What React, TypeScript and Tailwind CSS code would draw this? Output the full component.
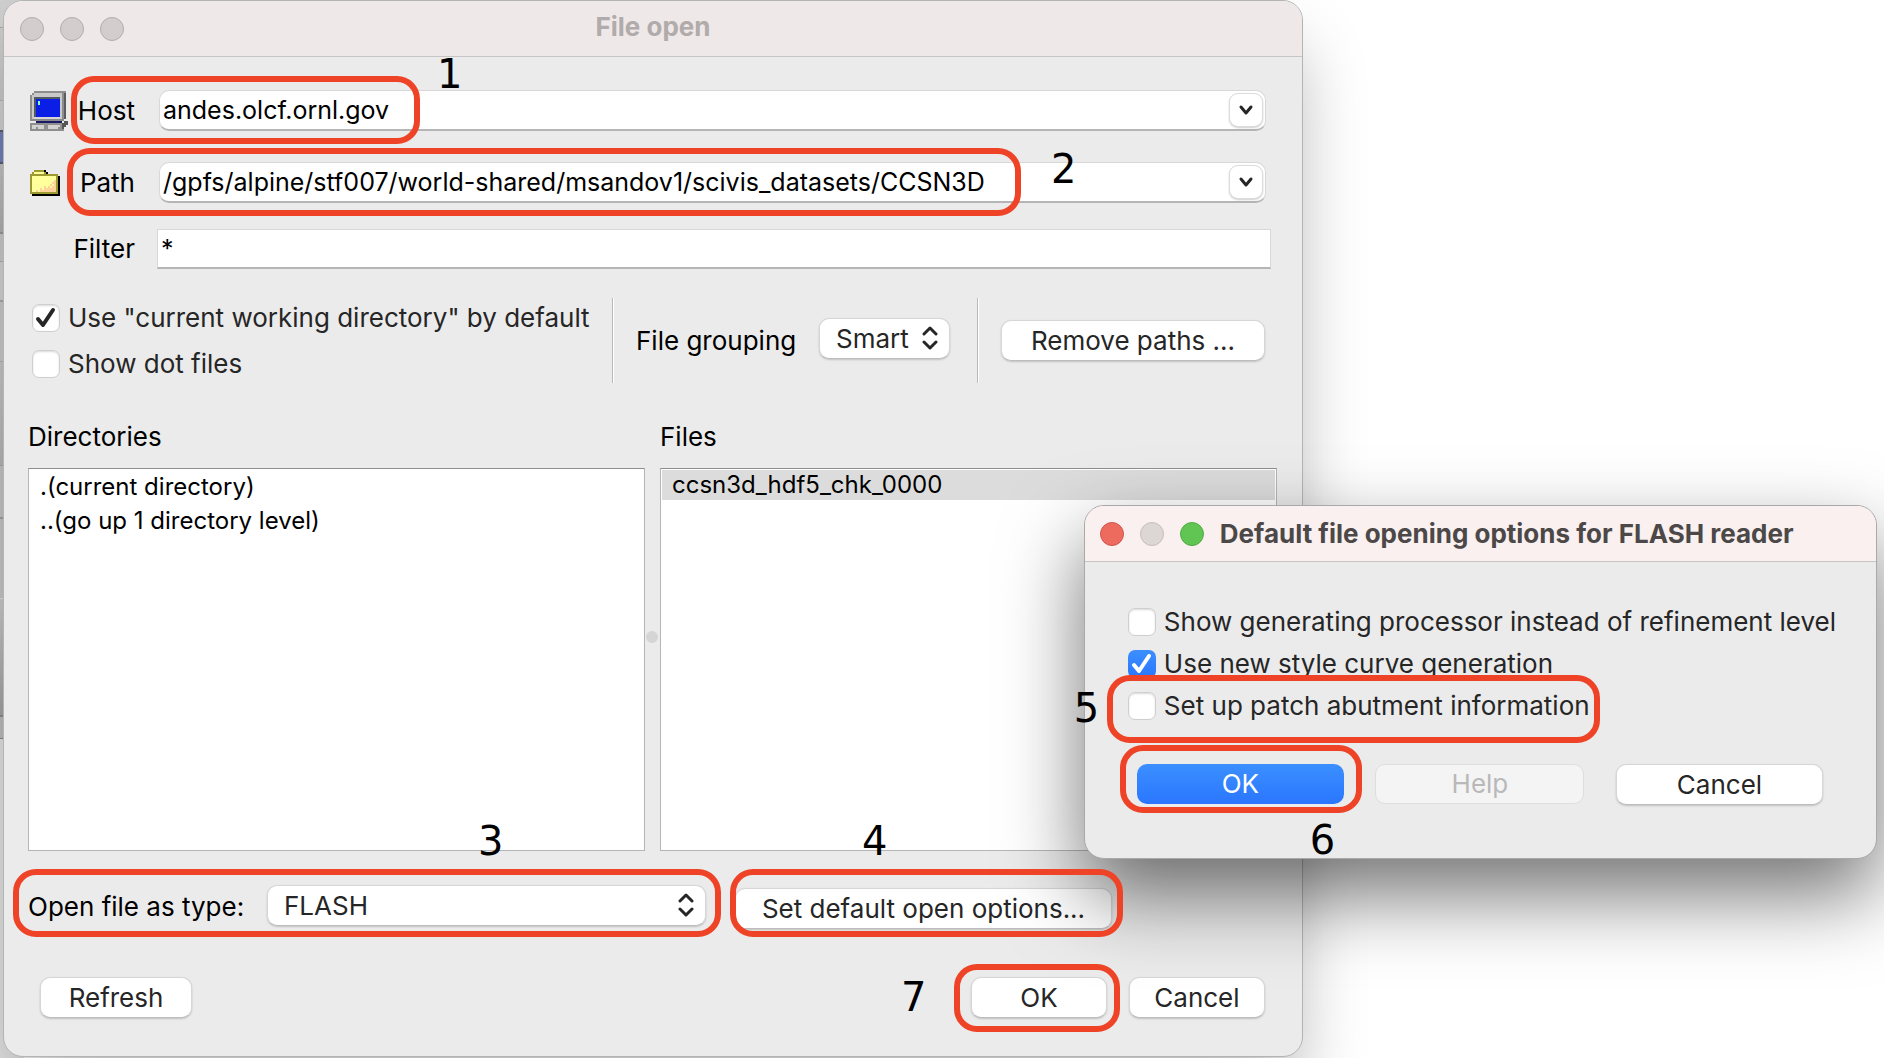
import React from "react";

const RING = "pointer-events-none absolute z-20 h-[68px] rounded-[23px] border-[6px] border-[#ee4326]";
const NUM = "pointer-events-none absolute z-20 font-['DejaVu_Sans'] text-[40px] leading-[40px] text-black";
const BTN = "h-[41px] rounded-[10px] border border-[#d6d6d6] border-b-[#bdbdbd] bg-white text-center text-[#262626] shadow-[0_1px_2px_rgba(0,0,0,0.18)]";

function Monitor() {
  return (
    <svg width="38" height="40" viewBox="0 0 19 20" shapeRendering="crispEdges" aria-hidden="true">
      <path d="M2 0h16v1H2zM1 1h1v1H1zM0 2h1v13H0z" fill="#8d8d8d" />
      <path d="M2 1h14v14H1V2h1z" fill="#c9c9c9" />
      <path d="M16 1h1v13h-1z" fill="#8d8d8d" />
      <path d="M17 1h1v13h-1z" fill="#5c5c5c" />
      <path d="M1 14h16v1H1z" fill="#8a8a8a" />
      <path d="M2 3h13v10H2z" fill="#505a60" />
      <path d="M3 4h12v9H3z" fill="#0a1ee6" />
      <path d="M2 13h13v1H2z" fill="#d6d6d6" />
      <path d="M4 5h1v2H4z" fill="#7dffb4" />
      <path d="M3 15h13v1H3z" fill="#1a1a66" />
      <path d="M0 16h17v4H0z" fill="#8f8f8f" />
      <path d="M1 17h6v1H1zM9 17h6v1H9zM1 18h2v1H1zM4 18h3v1H4zM9 18h5v1H9z" fill="#d2d2d2" />
      <path d="M17 15h2v2h-1v1h-1v1h-1v-3h1z" fill="#555" />
    </svg>
  );
}

function Folder() {
  return (
    <svg width="30" height="26" viewBox="0 0 15 13" shapeRendering="crispEdges" aria-hidden="true">
      <path d="M14 3h1v10H1v-1h13zM7 0h1v1h1v1H8V1H7z" fill="#000" />
      <path d="M2 0h5v1h1v1h6v10H0V2h1V1h1z" fill="#9c9a30" />
      <path d="M2 1h5v1H2zM1 3h12v8H1z" fill="#ffff9c" />
      <path d="M11 5h2v6h-2zM9 7h2v4H9zM7 8h2v3H7zM3 10h1v1H3zM5 9h1v1H5zM5 10h2v1H5z" fill="#ffd29c" />
      <path d="M11 5h1v1h-1zM9 7h1v1H9zM11 7h1v1h-1zM8 8h1v1H8zM10 8h1v1h-1z" fill="#ffff9c" />
    </svg>
  );
}

function Chevrons() {
  return (
    <svg width="16" height="24" viewBox="0 0 16 24" fill="none" stroke="#262626" strokeWidth="3" strokeLinecap="round" strokeLinejoin="round" className="pointer-events-none absolute right-3 top-2" aria-hidden="true">
      <path d="M2 8l6-6 6 6M2 16l6 6 6-6" />
    </svg>
  );
}

function Check({ id, label, checked = false, blue = false }: { id: string; label: string; checked?: boolean; blue?: boolean }) {
  return (
    <div className="flex h-7 items-center gap-2">
      <span className="relative flex h-7 w-7 shrink-0">
        <input
          id={id}
          type="checkbox"
          defaultChecked={checked}
          className={
            blue
              ? "h-7 w-7 appearance-none rounded-[7px] bg-linear-to-b from-[#3c8fff] to-[#2a76ff]"
              : "h-7 w-7 appearance-none rounded-[7px] border border-[#cfcfcf] bg-white shadow-[inset_0_1px_2px_rgba(0,0,0,0.15)]"
          }
        />
        {checked && (
          <svg viewBox="0 0 28 28" fill="none" stroke={blue ? "#fff" : "#262626"} strokeWidth="4" strokeLinecap="round" strokeLinejoin="round" className="pointer-events-none absolute inset-0" aria-hidden="true">
            <path d="M6 15l5 6 10-15" />
          </svg>
        )}
      </span>
      <label htmlFor={id} className="whitespace-nowrap text-[#262626]">{label}</label>
    </div>
  );
}

function Combo({ id, value }: { id: string; value: string }) {
  return (
    <div className="mr-[11px] flex h-[41px] min-w-0 flex-1 items-center rounded-[10px] border border-[#d8d8d8] border-b-2 border-b-[#b5b5b5] bg-white pr-0.5">
      <input id={id} defaultValue={value} className="h-full min-w-0 flex-1 bg-transparent pl-[3px] text-[25px] text-black outline-none" />
      <button type="button" aria-label="Show choices" className="flex h-[34px] w-[34px] items-center justify-center rounded-[9px] border border-[#dcdcdc] bg-white shadow-[0_1px_2px_rgba(0,0,0,0.2)]">
        <svg width="16" height="12" viewBox="0 0 16 12" fill="none" stroke="#262626" strokeWidth="3" strokeLinecap="round" strokeLinejoin="round" aria-hidden="true">
          <path d="M3 3l5 6 5-6" />
        </svg>
      </button>
    </div>
  );
}

function WindowBehind() {
  return (
    <div aria-hidden="true" className="absolute inset-y-0 left-0 flex w-6 flex-col bg-[#e6e6e6]">
      <div className="h-7 border-b border-[#a9a9a9] bg-[#cfcfcf]" />
      <div className="h-[73px] border-b border-[#b4b4b4] bg-[#cbcbcb]" />
      <div className="h-[29px] bg-[#d4d4d4]" />
      <div className="h-[34px] border-y-2 border-[#5c6272] bg-[#7183bd]" />
      <div className="h-[70px] border-b-2 border-[#9b9b9b] bg-linear-to-b from-[#c4c4c4] to-[#b2b2b2]" />
      <div className="h-7 border-b border-[#b0b0b0] bg-[#cdcdcd]" />
      <div className="h-10 border-b-2 border-[#aaaaaa] bg-[#d5d5d5]" />
      <div className="h-[60px] border-b border-[#b4b4b4] bg-[#cdcdcd]" />
      <div className="h-[104px] border-b border-[#a9a9a9] bg-linear-to-b from-[#c9c9c9] to-[#b9b9b9]" />
      <div className="h-[53px] border-b-2 border-[#a4a4a4] bg-[#c8c8c8]" />
      <div className="h-[80px] border-b border-[#e4e4e4] bg-[#c9c9c9]" />
      <div className="h-[118px] border-b-2 border-[#8f8f8f] bg-linear-to-b from-[#cdcdcd] to-[#a5a5a5]" />
      <div className="h-[22px] border-b border-[#858585] bg-[#bfbfbf]" />
    </div>
  );
}

function MainWindow() {
  return (
    <main className="relative ml-[3px] w-[69%] rounded-[20px] border border-[#b4b4b4] bg-[#ebebeb] shadow-[0_40px_70px_-8px_rgba(0,0,0,0.3)]">
      <header className="grid h-14 grid-cols-[1fr_auto_1fr] items-center rounded-t-[19px] border-b border-[#c9c4c4] bg-[#eee8e8] px-4">
        <div className="flex gap-4">
          <button type="button" aria-label="Close" className="h-6 w-6 rounded-full border border-[#b3adad] bg-[#d3cdcd]" />
          <button type="button" aria-label="Minimize" className="h-6 w-6 rounded-full border border-[#b3adad] bg-[#d3cdcd]" />
          <button type="button" aria-label="Zoom" className="h-6 w-6 rounded-full border border-[#b3adad] bg-[#d3cdcd]" />
        </div>
        <h1 className="pb-1 font-bold text-[#b1abab]">File open</h1>
      </header>

      <form className="flex flex-col pb-[38px] pl-6 pr-[25px] pt-[33px]">
        <div className="relative flex items-center">
          <div className="flex w-[131px] items-center justify-between pl-0.5 pr-6">
            <Monitor />
            <label htmlFor="host">Host</label>
          </div>
          <Combo id="host" value="andes.olcf.ornl.gov" />
          <div className={RING + " -top-[14px] left-[43px] w-[349px]"} />
          <div className={NUM + " -top-[36px] left-[409px]"}>1</div>
        </div>
        <div className="relative mt-[31px] flex items-center">
          <div className="flex w-[131px] items-center justify-between pl-0.5 pr-6">
            <Folder />
            <label htmlFor="path">Path</label>
          </div>
          <Combo id="path" value="/gpfs/alpine/stf007/world-shared/msandov1/scivis_datasets/CCSN3D" />
          <div className={RING + " -top-[14px] left-[39px] w-[954px]"} />
          <div className={NUM + " -top-[13px] left-[1023px]"}>2</div>
        </div>
        <div className="mt-[26px] flex items-center">
          <label htmlFor="filter" className="w-[129px] pr-[22px] text-right">Filter</label>
          <input id="filter" defaultValue="*" className="mr-1.5 h-10 min-w-0 flex-1 border border-[#d8d8d8] border-b-2 border-b-[#b5b5b5] bg-white pl-[3px] text-[25px] text-black outline-none" />
        </div>

        <div className="mt-[29px] flex h-[85px] items-center">
          <div className="flex w-[584px] flex-col gap-[18px] pl-1">
            <Check id="cwd" label={'Use "current working directory" by default'} checked />
            <Check id="dots" label="Show dot files" />
          </div>
          <div className="w-0.5 self-stretch border-l border-[#b9b9b9] bg-white" />
          <label htmlFor="grouping" className="ml-[22px] w-[183px] whitespace-nowrap">File grouping</label>
          <div className="relative mb-1 w-[131px]">
            <select id="grouping" className={BTN + " w-full appearance-none pl-4 pr-8 text-left"}>
              <option>Smart</option>
            </select>
            <Chevrons />
          </div>
          <div className="ml-[27px] w-0.5 self-stretch border-l border-[#b9b9b9] bg-white" />
          <button type="button" className={BTN + " ml-[22px] mr-3 flex-1"}>Remove paths ...</button>
        </div>

        <div className="mt-[39px] flex">
          <section className="flex-1">
            <h2 id="dirs" className="leading-[30px]">Directories</h2>
            <ul role="listbox" aria-labelledby="dirs" className="mt-4 h-[383px] border border-[#b5b5b5] border-t-[#8e8e8e] bg-white px-[11px] pt-px text-[24px] leading-[34px]">
              <li role="option" aria-selected="false">.(current directory)</li>
              <li role="option" aria-selected="false">..(go up 1 directory level)</li>
            </ul>
          </section>
          <div className="flex w-[15px] items-center justify-center">
            <span className="h-3 w-3 rounded-full bg-[#d5d5d5]" />
          </div>
          <section className="flex-1">
            <h2 id="files" className="leading-[30px]">Files</h2>
            <ul role="listbox" aria-labelledby="files" className="mt-4 h-[383px] border border-[#b5b5b5] border-t-[#8e8e8e] bg-white p-px text-[24px] leading-[30px]">
              <li role="option" aria-selected="true" className="bg-[#dcdcdc] pl-2.5">ccsn3d_hdf5_chk_0000</li>
            </ul>
          </section>
        </div>

        <div className="relative mt-[34px] flex">
          <label htmlFor="type" className="w-[239px] whitespace-nowrap leading-[44px]">Open file as type:</label>
          <div className="relative w-[439px]">
            <select id="type" className={BTN + " w-full appearance-none px-4 text-left"}>
              <option>FLASH</option>
            </select>
            <Chevrons />
          </div>
          <button type="button" className={BTN + " ml-[29px] mt-[3px] w-[377px]"}>Set default open options...</button>
          <div className={RING + " -left-[15px] -top-[16px] w-[708px]"} />
          <div className={NUM + " -top-[64px] left-[450px]"}>3</div>
          <div className={RING + " -top-[16px] left-[702px] w-[393px]"} />
          <div className={NUM + " -top-[64px] left-[834px]"}>4</div>
        </div>

        <div className="mt-12 flex items-center pl-3 pr-3">
          <button type="button" className={BTN + " w-[152px]"}>Refresh</button>
          <div className="relative ml-auto">
            <button type="submit" className={BTN + " w-[136px]"}>OK</button>
            <div className={RING + " -left-[17px] -top-[13px] w-[166px]"} />
            <div className={NUM + " -left-[70px] top-0"}>7</div>
          </div>
          <button type="button" className={BTN + " ml-[22px] w-[136px]"}>Cancel</button>
        </div>
      </form>
    </main>
  );
}

function OptionsDialog() {
  return (
    <div role="dialog" aria-labelledby="opts" className="absolute right-[7px] top-[505px] z-10 w-[42.1%] rounded-[20px] border border-[#a9a9a9] bg-[#ebebeb] shadow-[0_36px_80px_rgba(0,0,0,0.55)]">
      <header className="flex h-14 items-center gap-4 rounded-t-[19px] border-b border-[#c9c4c4] bg-[#f9f0ef] px-[15px]">
        <button type="button" aria-label="Close" className="h-6 w-6 rounded-full border border-[#d0564b] bg-[#ed6a5e]" />
        <button type="button" aria-label="Minimize" className="h-6 w-6 rounded-full border border-[#c4bfbd] bg-[#dcd7d5]" />
        <button type="button" aria-label="Zoom" className="h-6 w-6 rounded-full border border-[#52ab43] bg-[#61c554]" />
        <h2 id="opts" className="whitespace-nowrap font-bold text-[#4c4848]">Default file opening options for FLASH reader</h2>
      </header>
      <form className="px-[43px] pb-[53px] pt-[46px]">
        <div className="flex flex-col gap-3.5">
          <Check id="proc" label="Show generating processor instead of refinement level" />
          <Check id="curve" label="Use new style curve generation" checked blue />
          <div className="relative">
            <Check id="patch" label="Set up patch abutment information" />
            <div className={RING + " -left-[21px] -top-[17px] w-[493px]"} />
            <div className={NUM + " -left-[54px] -top-[4px]"}>5</div>
          </div>
        </div>
        <div className="mt-11 flex justify-between pl-[9px] pr-[10px]">
          <div className="relative">
            <button type="submit" className="h-10 w-[207px] rounded-[10px] bg-linear-to-b from-[#3c8fff] to-[#2a76ff] text-white">OK</button>
            <div className={RING + " -left-[17px] -top-[19px] w-[242px]"} />
            <div className={NUM + " left-[173px] top-[56px]"}>6</div>
          </div>
          <button type="button" disabled className="h-10 w-[209px] rounded-[10px] border border-[#dedede] bg-[#f4f4f4] text-[#b9b9b9]">Help</button>
          <button type="button" className={BTN + " w-[207px]"}>Cancel</button>
        </div>
      </form>
    </div>
  );
}

export default function App() {
  return (
    <div className="relative min-h-screen overflow-hidden bg-white font-['Inter',sans-serif] text-[26px] leading-[30px] text-black">
      <WindowBehind />
      <MainWindow />
      <OptionsDialog />
    </div>
  );
}
